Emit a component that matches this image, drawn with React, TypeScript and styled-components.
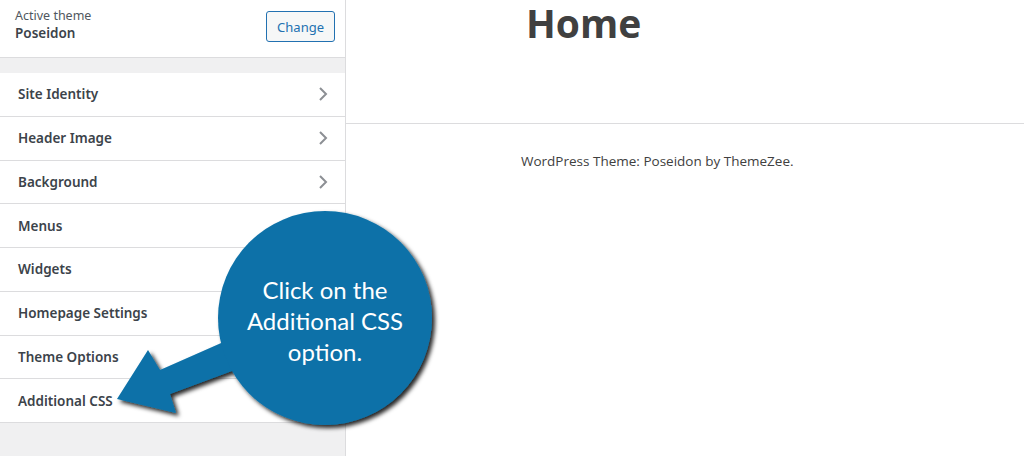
import React from 'react';
import styled, { createGlobalStyle } from 'styled-components';

const GlobalStyle = createGlobalStyle`
  html, body {
    margin: 0;
    padding: 0;
    background: #fff;
  }
  body {
    font-family: "Noto Sans", "Open Sans", sans-serif;
  }
`;

const Page = styled.div`
  position: relative;
  display: flex;
  width: 1024px;
  height: 456px;
  overflow: hidden;
`;

const Sidebar = styled.aside`
  display: flex;
  flex-direction: column;
  width: 345px;
  flex-shrink: 0;
  background: #f0f0f1;
  border-right: 1px solid #dcdcde;
`;

const ThemeHeader = styled.div`
  display: flex;
  align-items: center;
  justify-content: space-between;
  height: 58px;
  box-sizing: border-box;
  padding: 0 10px 0 15px;
  background: #fff;
  border-bottom: 1px solid #dcdcde;
`;

const ThemeInfo = styled.div`
  display: flex;
  flex-direction: column;
  margin-top: -8px;
`;

const ThemeLabel = styled.span`
  font-size: 12.5px;
  line-height: 17px;
  color: #50575e;
`;

const ThemeName = styled.span`
  font-size: 13.5px;
  line-height: 18px;
  font-weight: 600;
  color: #3c434a;
`;

const ChangeButton = styled.button`
  height: 31px;
  padding: 0 10px;
  margin-top: -4px;
  font-family: inherit;
  font-size: 13px;
  color: #2271b1;
  background: #f6f7f7;
  border: 1px solid #2271b1;
  border-radius: 3px;
`;

const Menu = styled.ul`
  list-style: none;
  margin: 15px 0 0;
  padding: 0;
  background: #fff;
`;

const MenuItem = styled.li`
  display: flex;
  align-items: center;
  justify-content: space-between;
  height: 43.75px;
  box-sizing: border-box;
  padding: 0 16px 0 18px;
  border-bottom: 1px solid #dcdcde;
  font-size: 13.5px;
  font-weight: 600;
  color: #3c434a;
`;

const Preview = styled.main`
  flex: 1;
  display: flex;
  flex-direction: column;
`;

const SiteHeader = styled.header`
  height: 124px;
  box-sizing: border-box;
  padding: 0 0 0 180px;
  border-bottom: 1px solid #dcdcde;
`;

const PageTitle = styled.h1`
  margin: 0;
  font-family: "Open Sans", sans-serif;
  font-size: 39px;
  line-height: 46px;
  font-weight: 700;
  color: #404040;
`;

const Footer = styled.footer`
  padding: 28px 0 0 175px;
  font-family: "Open Sans", sans-serif;
  font-size: 13.5px;
  color: #404040;
`;

const Callout = styled.div`
  position: absolute;
  left: 100px;
  top: 200px;
  width: 345px;
  height: 235px;
  pointer-events: none;
`;

const CalloutText = styled.div`
  position: absolute;
  left: 118px;
  top: 74px;
  width: 214px;
  text-align: center;
  font-family: Lato, "Open Sans", sans-serif;
  font-size: 24px;
  line-height: 31px;
  color: #fff;
`;

const Chevron = () => (
  <svg width="12" height="16" viewBox="0 0 12 16">
    <path d="M3 2l6 6-6 6" fill="none" stroke="#8c8f94" strokeWidth="2" />
  </svg>
);

const items = [
  { label: 'Site Identity', arrow: true },
  { label: 'Header Image', arrow: true },
  { label: 'Background', arrow: true },
  { label: 'Menus', arrow: false },
  { label: 'Widgets', arrow: false },
  { label: 'Homepage Settings', arrow: false },
  { label: 'Theme Options', arrow: false },
  { label: 'Additional CSS', arrow: false },
];

export default function App() {
  return (
    <Page>
      <GlobalStyle />
      <Sidebar>
        <ThemeHeader>
          <ThemeInfo>
            <ThemeLabel>Active theme</ThemeLabel>
            <ThemeName>Poseidon</ThemeName>
          </ThemeInfo>
          <ChangeButton>Change</ChangeButton>
        </ThemeHeader>
        <Menu>
          {items.map((it) => (
            <MenuItem key={it.label}>
              {it.label}
              {it.arrow && <Chevron />}
            </MenuItem>
          ))}
        </Menu>
      </Sidebar>
      <Preview>
        <SiteHeader>
          <PageTitle>Home</PageTitle>
        </SiteHeader>
        <Footer>WordPress Theme: Poseidon by ThemeZee.</Footer>
      </Preview>
      <Callout>
        <svg width="345" height="235" viewBox="100 200 345 235">
          <defs>
            <filter id="shadow" x="-20%" y="-20%" width="140%" height="140%">
              <feDropShadow dx="3" dy="3" stdDeviation="2" floodColor="#000" floodOpacity="0.85" />
            </filter>
          </defs>
          <g filter="url(#shadow)" fill="#0a71a8">
            <polygon points="117,399 148,350 160,370 228,340 240,368 170,394 176,413" />
            <circle cx="325" cy="318" r="107" />
          </g>
        </svg>
        <CalloutText>
          Click on the
          <br />
          Additional CSS
          <br />
          option.
        </CalloutText>
      </Callout>
    </Page>
  );
}
